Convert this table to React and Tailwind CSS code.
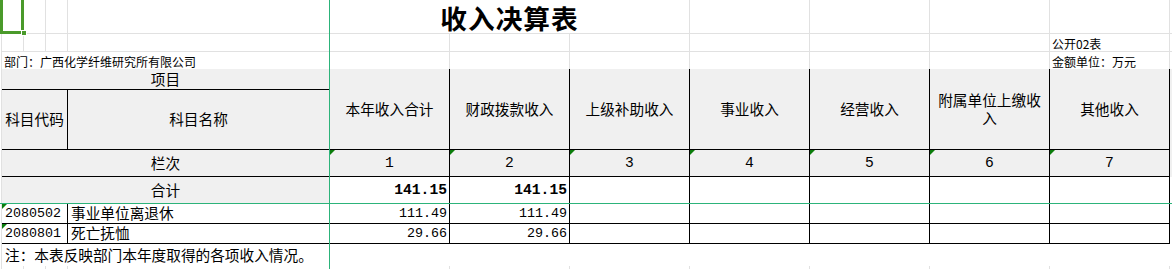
import React from 'react';

const cjk = "font-['Noto_Sans_CJK_SC','Noto_Sans',sans-serif]";
const mono = "font-['Liberation_Mono','DejaVu_Sans_Mono',monospace]";

// single spreadsheet cell; tri = the little green "number stored as text" flag
function Cell({ className = '', tri = false, children }) {
  return (
    <div className={`relative flex min-w-0 ${className}`}>
      {tri && (
        <span className="absolute left-0 top-0 h-0 w-0 border-t-[5px] border-r-[5px] border-t-[#0b7d0b] border-r-transparent" />
      )}
      {children}
    </div>
  );
}

const headers = ['本年收入合计', '财政拨款收入', '上级补助收入', '事业收入', '经营收入', '附属单位上缴收入', '其他收入'];
const headerCols = ['col-start-6', 'col-start-7', 'col-start-8', 'col-start-9', 'col-start-10', 'col-start-11', 'col-start-12'];

const rows = [
  { code: '2080502', name: '事业单位离退休', a: '111.49', b: '111.49', row: 'row-start-8' },
  { code: '2080801', name: '死亡抚恤', a: '29.66', b: '29.66', row: 'row-start-9' },
];

export default function App() {
  const gl = 'border-[#e1e1e1]';
  const bk = 'border-r border-b border-black';

  return (
    <div className={`relative h-[269px] w-[1172px] overflow-hidden bg-white text-black ${cjk}`}>
      <div className="grid h-full grid-cols-[2px_22px_22px_22px_262px_repeat(7,120px)_2px] grid-rows-[34px_18px_17px_21px_60px_27px_27px_20px_20px_22px_3px]">
        {/* left margin strip */}
        <div className={`col-start-1 row-start-1 row-span-11 border-r ${gl}`} />

        {/* row 1 */}
        <Cell className={`col-start-2 row-start-1 border-r border-b ${gl}`} />
        <Cell className={`col-start-3 row-start-1 border-r border-b ${gl}`} />
        <Cell className={`col-start-4 row-start-1 border-r border-b ${gl}`} />
        <Cell className={`col-start-5 row-start-1 border-r border-b ${gl}`} />
        <Cell className={`col-start-6 col-span-3 row-start-1 items-end justify-center border-r border-b ${gl}`}>
          <span className="text-[26.67px] font-bold leading-[30px] tracking-[1px]">收入决算表</span>
        </Cell>
        <Cell className={`col-start-9 row-start-1 border-r border-b ${gl}`} />
        <Cell className={`col-start-10 row-start-1 border-r border-b ${gl}`} />
        <Cell className={`col-start-11 row-start-1 border-r border-b ${gl}`} />
        <Cell className={`col-start-12 row-start-1 border-r border-b ${gl}`} />
        <Cell className={`col-start-13 row-start-1 border-b ${gl}`} />

        {/* row 2 */}
        <Cell className={`col-start-2 row-start-2 border-r border-b ${gl}`} />
        <Cell className={`col-start-3 row-start-2 border-r border-b ${gl}`} />
        <Cell className={`col-start-4 row-start-2 border-r border-b ${gl}`} />
        <Cell className={`col-start-5 row-start-2 border-r border-b ${gl}`} />
        <Cell className={`col-start-6 row-start-2 border-r border-b ${gl}`} />
        <Cell className={`col-start-7 row-start-2 border-r border-b ${gl}`} />
        <Cell className={`col-start-8 row-start-2 border-r border-b ${gl}`} />
        <Cell className={`col-start-9 row-start-2 border-r border-b ${gl}`} />
        <Cell className={`col-start-10 row-start-2 border-r border-b ${gl}`} />
        <Cell className={`col-start-11 row-start-2 border-r border-b ${gl}`} />
        <Cell className={`col-start-12 row-start-2 items-end border-r border-b pl-[2px] ${gl}`}>
          <span className="whitespace-nowrap text-[12px] leading-[14px]">公开02表</span>
        </Cell>
        <Cell className={`col-start-13 row-start-2 border-b ${gl}`} />

        {/* row 3 */}
        <Cell className="col-start-2 col-span-4 row-start-3 items-end pl-[2px]">
          <span className="whitespace-nowrap text-[12px] leading-[14px]">部门：广西化学纤维研究所有限公司</span>
        </Cell>
        <Cell className={`col-start-6 row-start-3 border-r ${gl}`} />
        <Cell className={`col-start-7 row-start-3 border-r ${gl}`} />
        <Cell className={`col-start-8 row-start-3 border-r ${gl}`} />
        <Cell className={`col-start-9 row-start-3 border-r ${gl}`} />
        <Cell className={`col-start-10 row-start-3 border-r ${gl}`} />
        <Cell className={`col-start-11 row-start-3 border-r ${gl}`} />
        <Cell className={`col-start-12 row-start-3 items-end border-r pl-[2px] ${gl}`}>
          <span className="whitespace-nowrap text-[12px] leading-[14px]">金额单位：万元</span>
        </Cell>

        {/* header */}
        <Cell className={`col-start-2 col-span-4 row-start-4 items-center justify-center bg-[#f0f0f0] ${bk}`}>
          <span className="text-[14.67px] leading-none">项目</span>
        </Cell>
        <Cell className={`col-start-2 col-span-3 row-start-5 items-center justify-center bg-[#f0f0f0] ${bk}`}>
          <span className="whitespace-nowrap text-[14.67px] leading-none">科目代码</span>
        </Cell>
        <Cell className={`col-start-5 row-start-5 items-center justify-center bg-[#f0f0f0] ${bk}`}>
          <span className="text-[14.67px] leading-none">科目名称</span>
        </Cell>
        {headers.map((h, i) => (
          <Cell key={h} className={`${headerCols[i]} row-start-4 row-span-2 items-center justify-center bg-[#f0f0f0] ${bk}`}>
            <span className="max-w-[108px] text-center text-[14.67px] leading-[18px]">{h}</span>
          </Cell>
        ))}
        <Cell className="col-start-13 row-start-4 row-span-3 bg-[#f0f0f0]" />

        {/* 栏次 */}
        <Cell className={`col-start-2 col-span-4 row-start-6 items-center justify-center bg-[#f0f0f0] ${bk}`}>
          <span className="text-[14.67px] leading-none">栏次</span>
        </Cell>
        {headerCols.map((c, i) => (
          <Cell key={c} tri className={`${c} row-start-6 items-center justify-center bg-[#f0f0f0] ${bk}`}>
            <span className={`${mono} text-[14.67px] leading-none`}>{i + 1}</span>
          </Cell>
        ))}

        {/* 合计 */}
        <Cell className={`col-start-2 col-span-4 row-start-7 items-center justify-center bg-[#f0f0f0] ${bk}`}>
          <span className="text-[14.67px] leading-none">合计</span>
        </Cell>
        {headerCols.map((c, i) => (
          <Cell key={c} className={`${c} row-start-7 items-center justify-end pr-[2px] ${bk}`}>
            {i < 2 && <span className={`${mono} text-[14.67px] font-bold leading-none`}>141.15</span>}
          </Cell>
        ))}

        {/* data rows */}
        {rows.map((r) => (
          <React.Fragment key={r.code}>
            <Cell tri className={`col-start-2 col-span-3 ${r.row} items-center pl-[3px] ${bk}`}>
              <span className={`${mono} text-[13.33px] leading-none`}>{r.code}</span>
            </Cell>
            <Cell className={`col-start-5 ${r.row} items-center pl-[3px] ${bk}`}>
              <span className="whitespace-nowrap text-[14.67px] leading-none">{r.name}</span>
            </Cell>
            {headerCols.map((c, i) => (
              <Cell key={c} className={`${c} ${r.row} items-center justify-end pr-[2px] ${bk}`}>
                {i === 0 && <span className={`${mono} text-[13.33px] leading-none`}>{r.a}</span>}
                {i === 1 && <span className={`${mono} text-[13.33px] leading-none`}>{r.b}</span>}
              </Cell>
            ))}
          </React.Fragment>
        ))}

        {/* note */}
        <Cell className="col-start-2 col-span-11 row-start-10 items-center pl-[3px]">
          <span className="whitespace-nowrap text-[14.67px] leading-none">注：本表反映部门本年度取得的各项收入情况。</span>
        </Cell>

        {/* row 11 gridline stubs */}
        <Cell className={`col-start-2 row-start-11 border-r ${gl}`} />
        <Cell className={`col-start-3 row-start-11 border-r ${gl}`} />
        <Cell className={`col-start-4 row-start-11 border-r ${gl}`} />
        <Cell className={`col-start-5 row-start-11 border-r ${gl}`} />
        {headerCols.map((c) => (
          <Cell key={c} className={`${c} row-start-11 border-r ${gl}`} />
        ))}
      </div>

      {/* freeze panes */}
      <div className="absolute left-[329px] top-0 h-full w-px bg-[#2cb37a]" />
      <div className="absolute left-0 top-[203px] h-px w-full bg-[#2cb37a]" />

      {/* active cell A1 */}
      <div className="absolute left-0 top-[-3px] h-[37px] w-[24px] border-[3px] border-[#4a9a2a]" />
      <div className="absolute left-[21px] top-[30px] h-[6px] w-[6px] border border-white bg-[#4a9a2a]" />
    </div>
  );
}
